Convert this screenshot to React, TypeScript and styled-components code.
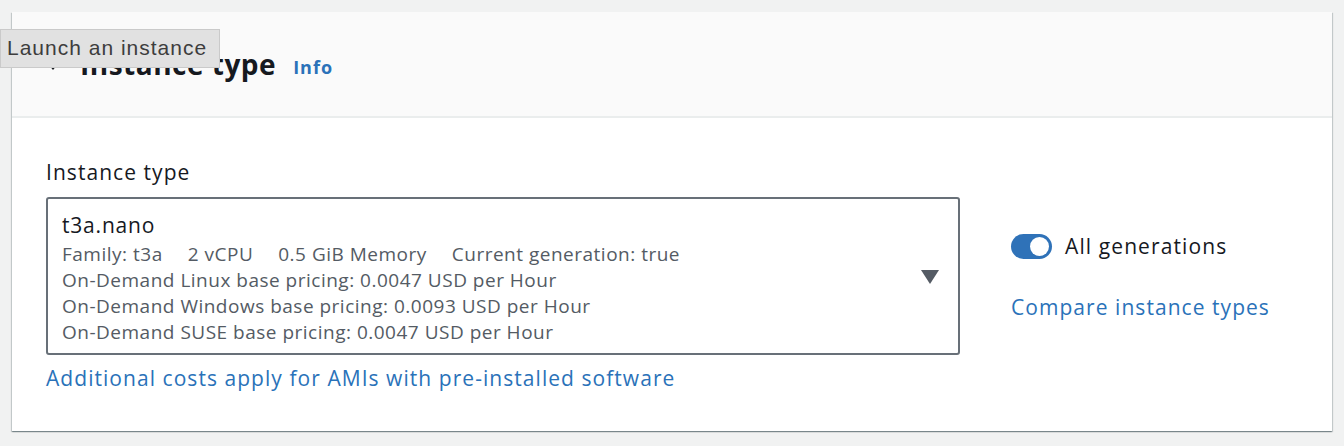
import styled, { createGlobalStyle } from 'styled-components';

const GlobalStyle = createGlobalStyle`
  html, body {
    margin: 0;
    padding: 0;
    background: #f1f2f2;
    font-family: 'Open Sans', 'Noto Sans', sans-serif;
    color: #16191f;
  }
`;

const Page = styled.div`
  position: relative;
  padding: 12px 12px 14px 12px;
`;

const Card = styled.section`
  background: #fff;
  box-shadow: 0 1px 1px 0 rgba(0, 28, 36, 0.3), 1px 1px 1px 0 rgba(0, 28, 36, 0.15),
    -1px 1px 1px 0 rgba(0, 28, 36, 0.15);
`;

const CardHeader = styled.header`
  display: flex;
  align-items: center;
  height: 106px;
  padding: 0 0 0 37px;
  background: #fafafa;
  border-bottom: 2px solid #eaeded;
  box-sizing: border-box;
`;

const Caret = styled.span`
  width: 0;
  height: 0;
  border-left: 4px solid transparent;
  border-right: 4px solid transparent;
  border-top: 5px solid #16191f;
  margin: 6px 23px 0 0;
`;

const Title = styled.h2`
  margin: 0;
  font-size: 28px;
  font-weight: 700;
  letter-spacing: 0.5px;
`;

const InfoLink = styled.a`
  color: #2a72b9;
  font-size: 18px;
  font-weight: 700;
  letter-spacing: 1px;
  margin: 6px 0 0 17px;
  text-decoration: none;
`;

const CardBody = styled.div`
  display: flex;
  align-items: flex-start;
  gap: 51px;
  padding: 40px 34px 39px 34px;
`;

const Field = styled.div`
  display: flex;
  flex-direction: column;
  width: 914px;
`;

const Label = styled.label`
  font-size: 21px;
  letter-spacing: 1.05px;
  line-height: 28px;
  margin-bottom: 11px;
`;

const Select = styled.div`
  display: flex;
  align-items: center;
  border: 2px solid #687078;
  border-radius: 3px;
  padding: 10px 19px 8px 14px;
`;

const Option = styled.div`
  flex: 1;
`;

const OptionName = styled.div`
  font-size: 21px;
  letter-spacing: 0.8px;
  line-height: 32px;
`;

const OptionTags = styled.div`
  display: flex;
  gap: 25px;
`;

const OptionLine = styled.div`
  font-size: 19px;
  letter-spacing: 0.5px;
  line-height: 26px;
  color: #545b64;
`;

const Triangle = styled.span`
  width: 0;
  height: 0;
  border-left: 9px solid transparent;
  border-right: 9px solid transparent;
  border-top: 14px solid #545b64;
`;

const Link = styled.a<{ gap?: number }>`
  color: #2a72b9;
  font-size: 21px;
  letter-spacing: 1.05px;
  line-height: 28px;
  text-decoration: none;
  margin-top: ${(p) => p.gap ?? 0}px;
`;

const Side = styled.div`
  display: flex;
  flex-direction: column;
  padding-top: 73px;
`;

const ToggleRow = styled.div`
  display: flex;
  align-items: center;
  gap: 13px;
  font-size: 21px;
  letter-spacing: 1.1px;
  line-height: 30px;
`;

const Toggle = styled.span<{ on: boolean }>`
  position: relative;
  width: 41px;
  height: 25px;
  border-radius: 13px;
  background: ${(p) => (p.on ? '#2f72b8' : '#aab7b8')};

  &::after {
    content: '';
    position: absolute;
    top: 3px;
    left: ${(p) => (p.on ? '19px' : '3px')};
    width: 19px;
    height: 19px;
    border-radius: 50%;
    background: #fff;
  }
`;

const Tooltip = styled.div`
  position: absolute;
  top: 29px;
  left: 0;
  padding: 5px 12px 6px 6px;
  background: #e1e1e1;
  border: 1px solid #cacaca;
  color: #3d3d3d;
  font-family: 'Liberation Sans', 'Noto Sans', sans-serif;
  font-size: 21px;
  letter-spacing: 1px;
  line-height: 26px;
`;

const App = () => {
  const tags = ['Family: t3a', '2 vCPU', '0.5 GiB Memory', 'Current generation: true'];
  const pricing = [
    ['Linux', '0.0047'],
    ['Windows', '0.0093'],
    ['SUSE', '0.0047'],
  ];

  return (
    <>
      <GlobalStyle />
      <Page>
        <Card>
          <CardHeader>
            <Caret />
            <Title>Instance type</Title>
            <InfoLink href='#'>Info</InfoLink>
          </CardHeader>
          <CardBody>
            <Field>
              <Label>Instance type</Label>
              <Select>
                <Option>
                  <OptionName>t3a.nano</OptionName>
                  <OptionTags>
                    {tags.map((t) => (
                      <OptionLine key={t}>{t}</OptionLine>
                    ))}
                  </OptionTags>
                  {pricing.map(([os, price]) => (
                    <OptionLine key={os}>
                      On-Demand {os} base pricing: {price} USD per Hour
                    </OptionLine>
                  ))}
                </Option>
                <Triangle />
              </Select>
              <Link href='#' gap={9}>
                Additional costs apply for AMIs with pre-installed software
              </Link>
            </Field>
            <Side>
              <ToggleRow>
                <Toggle on />
                All generations
              </ToggleRow>
              <Link href='#' gap={32}>
                Compare instance types
              </Link>
            </Side>
          </CardBody>
        </Card>
        <Tooltip>Launch an instance</Tooltip>
      </Page>
    </>
  );
};

export default App;
